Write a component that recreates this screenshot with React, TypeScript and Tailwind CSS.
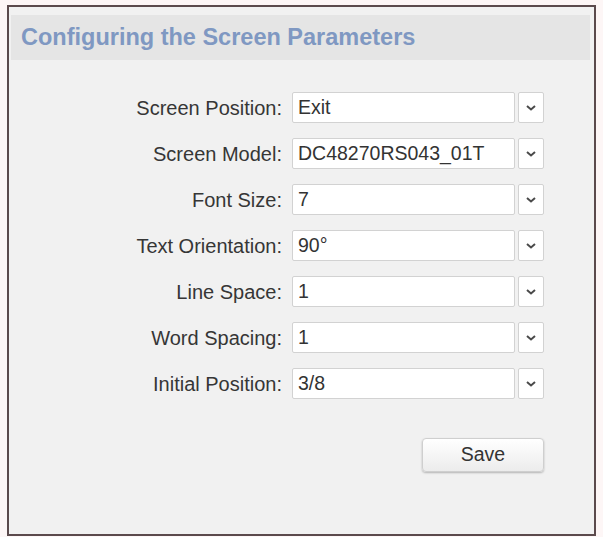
const FIELDS: { label: string; value: string }[] = [
  { label: "Screen Position:", value: "Exit" },
  { label: "Screen Model:", value: "DC48270RS043_01T" },
  { label: "Font Size:", value: "7" },
  { label: "Text Orientation:", value: "90°" },
  { label: "Line Space:", value: "1" },
  { label: "Word Spacing:", value: "1" },
  { label: "Initial Position:", value: "3/8" },
];

function Chevron() {
  return (
    <svg viewBox="0 0 10 6" className="h-[6px] w-[10px]" aria-hidden="true">
      <path d="M1 1 L5 4.5 L9 1" fill="none" stroke="#4a4a4a" strokeWidth="2" />
    </svg>
  );
}

function SelectRow({ label, value }: { label: string; value: string }) {
  return (
    <div className="flex h-[31px] items-center">
      <span className="w-[276px] pr-[5px] text-right text-[20px] text-[#363636]">
        {label}
      </span>
      <div className="ml-[5px] flex h-full">
        <div className="flex h-full w-[223px] items-center rounded-[2px] border border-[#d2d2d2] bg-white pl-[5px] text-[19.5px] text-[#333]">
          {value}
        </div>
        <div className="ml-[3px] flex h-full w-[26px] items-center justify-center rounded-[2px] border border-[#d2d2d2] bg-white">
          <Chevron />
        </div>
      </div>
    </div>
  );
}

export default function App() {
  return (
    <div
      className="h-[537px] w-[603px] bg-[#fdf6f6] pl-[7px] pt-[5px]"
      style={{ fontFamily: '"Liberation Sans", Arial, sans-serif' }}
    >
      <div className="flex h-[531px] w-[589px] flex-col border-2 border-[#5b4a4c] bg-[#f1f1f1] pl-[2px] pr-[4px] pt-[8px]">
        <div className="flex h-[45px] items-center bg-[#e5e5e5] pl-[10px]">
          <h1 className="text-[23.5px] font-bold text-[#7f98c2]">
            Configuring the Screen Parameters
          </h1>
        </div>
        <div className="mt-[32px] flex flex-col gap-[15px]">
          {FIELDS.map((f) => (
            <SelectRow key={f.label} label={f.label} value={f.value} />
          ))}
        </div>
        <div className="mt-[39px] flex">
          <button
            type="button"
            className="ml-[411px] h-[34px] w-[122px] rounded-[4px] border border-[#cfcfcf] bg-gradient-to-b from-white to-[#ececec] text-[19.5px] text-[#333] shadow-[0_1px_2px_rgba(0,0,0,0.25)]"
          >
            Save
          </button>
        </div>
      </div>
    </div>
  );
}
